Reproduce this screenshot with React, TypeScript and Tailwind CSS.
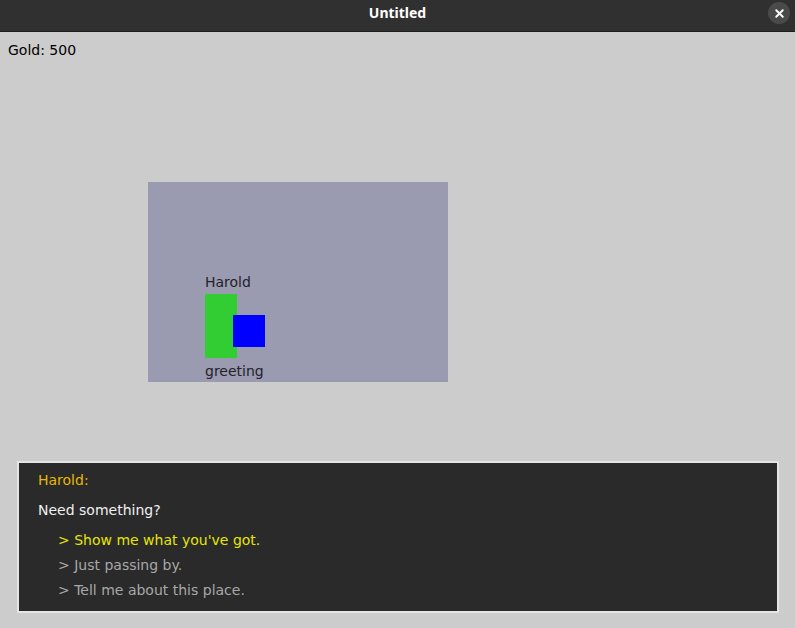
import { X } from "lucide-react";

const options = [
  { text: "Show me what you've got.", active: true },
  { text: "Just passing by.", active: false },
  { text: "Tell me about this place.", active: false },
];

export default function App() {
  return (
    <div className="w-[795px] h-[628px] flex flex-col bg-[#cccccc] font-['DejaVu_Sans',sans-serif] overflow-hidden">
      {/* window title bar */}
      <div className="relative h-[32px] shrink-0 bg-[#303030] border-b border-[#1c1c1c] flex items-center justify-center">
        <span className="text-white text-[14px] font-bold font-['Noto_Sans',sans-serif] -mt-[6px]">
          Untitled
        </span>
        <div className="absolute right-[5px] top-[2px] w-[22px] h-[22px] rounded-full bg-[#4a4a4a] flex items-center justify-center">
          <X size={13} strokeWidth={3.5} className="text-white" />
        </div>
      </div>

      {/* game view */}
      <div className="flex-1 flex flex-col">
        <div className="pl-[8px] pt-[10px] text-[14px] leading-[17px] text-black">Gold: 500</div>

        <div className="relative ml-[148px] mt-[123px] w-[300px] h-[200px] bg-[#9a9ab1]">
          <div className="absolute left-[57px] top-[92px] text-[14px] leading-[17px] text-[#222228]">Harold</div>
          <div className="absolute left-[57px] top-[112px] w-[32px] h-[64px] bg-[#32cd32]" />
          <div className="absolute left-[85px] top-[133px] w-[32px] h-[32px] bg-[#0000ff]" />
          <div className="absolute left-[57px] top-[181px] text-[14px] leading-[17px] text-[#222228]">greeting</div>
        </div>

        {/* dialog box */}
        <div className="ml-[17px] mt-[79px] w-[762px] h-[152px] border-2 border-[#e4e4e4] bg-[#2a2a2a] pl-[19px] pt-[9px] flex flex-col text-[14px] leading-[17px]">
          <div className="text-[#e8b800]">Harold:</div>
          <div className="mt-[13px] text-[#f0f0f0]">Need something?</div>
          <div className="mt-[13px] pl-[20px] flex flex-col gap-[8px]">
            {options.map((o, i) => (
              <div key={i} className={o.active ? "text-[#e6e600]" : "text-[#a8a8a8]"}>
                &gt; {o.text}
              </div>
            ))}
          </div>
        </div>
      </div>
    </div>
  );
}
